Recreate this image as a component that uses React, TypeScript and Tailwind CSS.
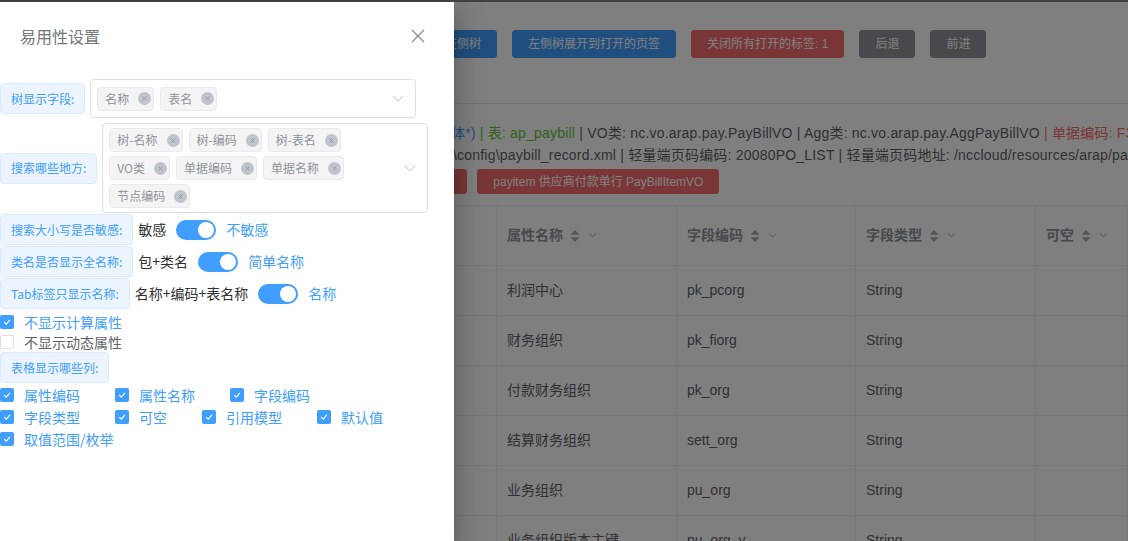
import React from "react"

const BLUE = "text-[#409eff]"

function LabelTag({ children }: { children: React.ReactNode }) {
  return (
    <span className="inline-flex h-[31px] shrink-0 items-center whitespace-nowrap rounded-[4px] border border-[#d9ecff] bg-[#ecf5ff] px-[10px] text-[12px] text-[#409eff]">
      {children}
    </span>
  )
}

function SelTag({ text }: { text: string }) {
  return (
    <span className="my-[2px] ml-[6px] flex h-[24px] items-center whitespace-nowrap rounded-[4px] border border-[#e9e9eb] bg-[#f4f4f5] pl-[7px] pr-[2px] text-[12px] text-[#909399]">
      {text}
      <span className="ml-[9px] flex h-[13px] w-[13px] items-center justify-center rounded-full bg-[#c0c4cc]">
        <svg viewBox="0 0 10 10" className="h-[7px] w-[7px]">
          <path d="M2 2l6 6M8 2l-6 6" stroke="#909399" strokeWidth="1.2" />
        </svg>
      </span>
    </span>
  )
}

function MultiSelect({ tags }: { tags: string[] }) {
  return (
    <div className="flex min-h-[39px] w-[326px] items-center rounded-[4px] border border-[#dcdfe6] bg-white">
      <div className="flex min-w-0 flex-1 flex-wrap py-[2px]">
        {tags.map((t) => (
          <SelTag key={t} text={t} />
        ))}
      </div>
      <div className="flex w-[35px] justify-center">
        <svg width="12" height="7" viewBox="0 0 12 7">
          <path d="M0.8 0.8L6 6L11.2 0.8" stroke="#c0c4cc" strokeWidth="1" fill="none" />
        </svg>
      </div>
    </div>
  )
}

function Switch() {
  return (
    <span className="relative mx-[10px] inline-block h-[20px] w-[40px] shrink-0 rounded-full bg-[#409eff]">
      <span className="absolute right-[2px] top-[2px] h-[16px] w-[16px] rounded-full bg-white" />
    </span>
  )
}

function SwitchRow({ label, off, on }: { label: string; off: string; on: string }) {
  return (
    <div className="flex items-center text-[14px]">
      <LabelTag>{label}</LabelTag>
      <span className="ml-[5px] text-[#303133]">{off}</span>
      <Switch />
      <span className={BLUE}>{on}</span>
    </div>
  )
}

function Check({ label, checked = true }: { label: string; checked?: boolean }) {
  return (
    <label className="flex items-center text-[14px] leading-[20px]">
      {checked ? (
        <span className="flex h-[14px] w-[14px] items-center justify-center rounded-[2px] bg-[#409eff]">
          <svg width="14" height="14" viewBox="0 0 14 14">
            <path d="M4.2 7.1L6.3 9.2L9.9 4.9" stroke="white" strokeWidth="1.2" fill="none" />
          </svg>
        </span>
      ) : (
        <span className="h-[14px] w-[14px] rounded-[2px] border border-[#dcdfe6] bg-white" />
      )}
      <span className={`pl-[10px] ${checked ? "text-[#409eff]" : "text-[#606266]"}`}>{label}</span>
    </label>
  )
}

function Drawer() {
  return (
    <div className="absolute left-0 top-0 flex h-full w-[454px] flex-col bg-white shadow-[0_8px_10px_-5px_rgba(0,0,0,0.2),0_16px_24px_2px_rgba(0,0,0,0.14),0_6px_30px_5px_rgba(0,0,0,0.12)]">
      <div className="mt-[24px] flex h-[24px] items-center justify-between pl-[20px] pr-[29px]">
        <span className="text-[16px] text-[#72767b]">易用性设置</span>
        <svg width="14" height="14" viewBox="0 0 14 14">
          <path d="M1 1l12 12M13 1L1 13" stroke="#8a8d93" strokeWidth="1.3" />
        </svg>
      </div>

      <div className="mt-[31px] flex flex-col">
        <div className="flex items-center gap-[5px]">
          <LabelTag>树显示字段:</LabelTag>
          <MultiSelect tags={["名称", "表名"]} />
        </div>
        <div className="mt-[5px] flex items-center gap-[5px]">
          <LabelTag>搜索哪些地方:</LabelTag>
          <MultiSelect tags={["树-名称", "树-编码", "树-表名", "VO类", "单据编码", "单据名称", "节点编码"]} />
        </div>
        <div className="mt-[1px] flex flex-col gap-[1px]">
          <SwitchRow label="搜索大小写是否敏感:" off="敏感" on="不敏感" />
          <SwitchRow label="类名是否显示全名称:" off="包+类名" on="简单名称" />
          <SwitchRow label="Tab标签只显示名称:" off="名称+编码+表名称" on="名称" />
        </div>
        <div className="mt-[3px]">
          <Check label="不显示计算属性" />
          <Check label="不显示动态属性" checked={false} />
        </div>
        <div>
          <LabelTag>表格显示哪些列:</LabelTag>
        </div>
        <div className="mt-[1px] flex flex-col">
          <div className="flex h-[22px] items-center gap-[35px]">
            <Check label="属性编码" />
            <Check label="属性名称" />
            <Check label="字段编码" />
          </div>
          <div className="flex h-[22px] items-center gap-[35px]">
            <Check label="字段类型" />
            <Check label="可空" />
            <Check label="引用模型" />
            <Check label="默认值" />
          </div>
          <div className="flex h-[22px] items-center">
            <Check label="取值范围/枚举" />
          </div>
        </div>
      </div>
    </div>
  )
}

function Btn({ children, color, h = "h-[28px]" }: { children: React.ReactNode; color: string; h?: string }) {
  return (
    <span className={`flex ${h} shrink-0 items-center whitespace-nowrap rounded-[3px] border px-[15px] text-[12px] text-white ${color}`}>
      {children}
    </span>
  )
}

function SortIcons() {
  return (
    <span className="ml-[7px] flex items-center gap-[9px]">
      <svg width="10" height="14" viewBox="0 0 10 14">
        <path d="M5 1L9.5 5.8H0.5z" fill="#a8abb2" />
        <path d="M5 13L0.5 8.2H9.5z" fill="#a8abb2" />
      </svg>
      <svg width="7" height="5" viewBox="0 0 7 5">
        <path d="M0.5 0.8L3.5 4L6.5 0.8" stroke="#a8abb2" fill="none" />
      </svg>
    </span>
  )
}

const rows = [
  ["利润中心", "pk_pcorg", "String"],
  ["财务组织", "pk_fiorg", "String"],
  ["付款财务组织", "pk_org", "String"],
  ["结算财务组织", "sett_org", "String"],
  ["业务组织", "pu_org", "String"],
  ["业务组织版本主键", "pu_org_v", "String"],
]

function BackgroundPage() {
  return (
    <div className="pt-[30px] font-['Liberation_Sans','Noto_Sans_CJK_SC',sans-serif] text-[#606266]">
      <div className="flex gap-[15px] pl-[405px]">
        <Btn color="bg-[#409eff] border-[#409eff]">收起左侧树</Btn>
        <Btn color="bg-[#409eff] border-[#409eff]">左侧树展开到打开的页签</Btn>
        <Btn color="bg-[#f56c6c] border-[#f56c6c]">关闭所有打开的标签: 1</Btn>
        <Btn color="bg-[#909399] border-[#909399]">后退</Btn>
        <Btn color="bg-[#909399] border-[#909399]">前进</Btn>
      </div>
      <div className="mt-[45px] border-t border-[#e4e7ed]" />

      <div className="mt-[18px] whitespace-nowrap text-[14px] leading-[22px] tracking-[0.2px]">
        <div className="pl-[451px]">
          <span className="text-[#409eff]">体*) </span>
          <span className="text-[#67c23a]">| 表: ap_paybill </span>
          <span>| VO类: nc.vo.arap.pay.PayBillVO | Agg类: nc.vo.arap.pay.AggPayBillVO </span>
          <span className="text-[#f56c6c]">| 单据编码: F3 | 节点编码: 20080PBM</span>
        </div>
        <div className="pl-[453px]">
          \config\paybill_record.xml | 轻量端页码编码: 20080PO_LIST | 轻量端页码地址: /nccloud/resources/arap/paybill
        </div>
      </div>

      <div className="mt-[3px] flex gap-[10px] pl-[376px]">
        <Btn color="bg-[#f56c6c] border-[#f56c6c]" h="h-[25px]">bodys 表体</Btn>
        <Btn color="bg-[#f56c6c] border-[#f56c6c]" h="h-[25px]">payitem 供应商付款单行 PayBillItemVO</Btn>
      </div>

      <div className="ml-[400px] mt-[11px] grid grid-cols-[97px_180px_179px_180px_1fr] border-t border-[#ebeef5] text-[14px]">
        {["", "属性名称", "字段编码", "字段类型", "可空"].map((h, i) => (
          <div key={i} className="flex h-[60px] items-center border-b border-r border-[#ebeef5] pl-[10px] font-bold text-[#909399]">
            {h && (
              <>
                <span>{h}</span>
                <SortIcons />
              </>
            )}
          </div>
        ))}
        {rows.map((r, ri) =>
          ["", ...r, ""].map((c, ci) => (
            <div key={`${ri}-${ci}`} className="flex h-[50px] items-center border-b border-r border-[#ebeef5] pl-[10px] text-[#606266]">
              {c}
            </div>
          ))
        )}
      </div>
    </div>
  )
}

export default function App() {
  return (
    <div className="relative h-[541px] w-full overflow-hidden bg-white font-['Noto_Sans_CJK_SC','Noto_Sans',sans-serif]">
      <BackgroundPage />
      <div className="absolute inset-0 bg-black/50" />
      <Drawer />
      <div className="absolute left-0 right-0 top-0 h-[2px] bg-[#404040]" />
    </div>
  )
}
